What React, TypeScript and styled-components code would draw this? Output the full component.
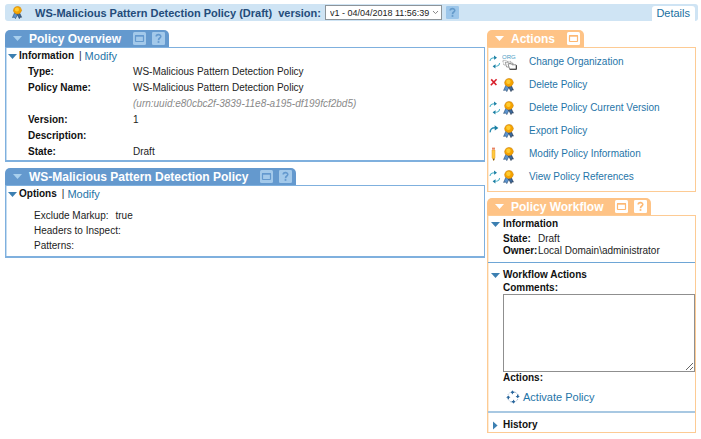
import React from "react";
import styled, { createGlobalStyle } from "styled-components";

const Global = createGlobalStyle`
  * { box-sizing: border-box; }
  body {
    margin: 0;
    background: #fff;
    color: #1c1c1c;
    font: 10px/16px "Liberation Sans", Arial, sans-serif;
  }
  h1, h2, h3, dl, dd, dt, ul, p { margin: 0; padding: 0; font-size: inherit; }
  button { border: 0; padding: 0; margin: 0; background: none; font: inherit; cursor: pointer; }
  svg { display: block; flex: none; }
`;

type Tone = "blue" | "orange";

const tones = {
  blue: { tab: "#6499ce", border: "#7fb0de", mark: "#a9d0ee", icon: "#a3c9ea", glyph: "#6499ce" },
  orange: { tab: "#fec386", border: "#fdcb94", mark: "#ffffff", icon: "#ffffff", glyph: "#fdb873" },
};

const Page = styled.div`
  padding: 4px 3px 5px 5px;
`;

const TopBar = styled.header`
  display: flex;
  align-items: center;
  height: 17px;
  padding: 0 3px 0 6px;
  border-radius: 3px;
  background: #cfe4f4;
  color: #244c7a;
  font-size: 11px;
`;

const PageTitle = styled.h1`
  margin-left: 11px;
  font-size: 11px;
  white-space: nowrap;
`;

const VersionLabel = styled.label`
  margin: 0 4px 0 6px;
  font-weight: bold;
`;

const SelectBox = styled.span`
  position: relative;
  display: block;
  margin-right: 4px;
  svg { position: absolute; right: 3px; top: 4px; pointer-events: none; }
`;

const VersionSelect = styled.select`
  display: block;
  appearance: none;
  width: 117px;
  height: 15px;
  padding: 0 0 0 4px;
  border: 1px solid #8d9499;
  border-radius: 0;
  background: #fff;
  color: #222;
  font: 9px/12px "Liberation Sans", Arial, sans-serif;
`;

const DetailsTab = styled.a`
  align-self: flex-end;
  margin-left: auto;
  padding: 0 5px 0 4px;
  border-radius: 3px 3px 0 0;
  background: #fff;
  color: #20709f;
  line-height: 15px;
  text-decoration: none;
`;

const Columns = styled.main`
  display: grid;
  grid-template-columns: minmax(0, 1fr) 209px;
  gap: 2px;
  align-items: start;
  padding: 9px 2px 0 0;
`;

const Column = styled.div`
  display: flex;
  flex-direction: column;
  gap: 6px;
`;

const PanelTab = styled.div<{ $tone: Tone }>`
  display: flex;
  align-items: center;
  width: fit-content;
  height: 17px;
  padding: 0 4px 0 8px;
  border-radius: 5px 5px 0 0;
  background: ${(p) => tones[p.$tone].tab};
  color: #fff;
`;

const PanelTitle = styled.h2`
  margin: 0 12px 0 7px;
  font-size: 12px;
  white-space: nowrap;
`;

const TabIcons = styled.div`
  display: flex;
  gap: 6px;
`;

const PanelBody = styled.div<{ $tone: Tone }>`
  border: 1px solid ${(p) => tones[p.$tone].border};
  border-bottom-width: ${(p) => (p.$tone === "blue" ? 2 : 1)}px;
  box-shadow: ${(p) => (p.$tone === "blue" ? "inset 1px 0 #c4dcf1" : "inset 1px 0 #feecd6")};
`;

const SectionHead = styled.div<{ $wide?: boolean }>`
  display: flex;
  align-items: center;
  gap: ${(p) => (p.$wide ? 3 : 2)}px;
  height: ${(p) => (p.$wide ? 14 : 16)}px;
  margin-top: ${(p) => (p.$wide ? 1 : 0)}px;
  padding-left: ${(p) => (p.$wide ? 3 : 2)}px;
  h3 { color: #111; }
`;

const Divider = styled.span`
  margin: 0 1px 0 3px;
`;

const Link = styled.a`
  color: #1f75a8;
  text-decoration: none;
`;

const BigLink = styled(Link)`
  font-size: 11px;
`;

const Fields = styled.dl`
  display: grid;
  grid-template-columns: 105px 1fr;
  padding: 0 0 0 22px;
  dt { color: #111; font-weight: bold; }
`;

const Uuid = styled.em`
  display: block;
  color: #8a8a8a;
`;

const Options = styled.dl`
  padding: 6px 0 3px 28px;
  line-height: 15px;
`;

const OptionRow = styled.div`
  display: flex;
  gap: 7px;
`;

const ActionList = styled.ul`
  list-style: none;
  padding: 2px 0 3px 1px;
`;

const ActionItem = styled.li`
  display: grid;
  grid-template-columns: 13px 27px 1fr;
  align-items: center;
  height: 23px;
`;

const Workflow = styled.dl`
  display: grid;
  grid-template-columns: 35px 1fr;
  padding: 2px 0 5px 15px;
  line-height: 12px;
  dt { color: #111; font-weight: bold; }
`;

const Rule = styled.hr<{ $heavy?: boolean }>`
  height: ${(p) => (p.$heavy ? 2 : 1)}px;
  margin: 0 0 5px;
  border: 0;
  background: ${(p) => (p.$heavy ? "#a8c8e2" : "#6ea6d6")};
`;

const WorkflowForm = styled.div`
  display: flex;
  flex-direction: column;
  padding: 0 0 2px 15px;
  line-height: 12px;
`;

const FieldTitle = styled.label`
  color: #111;
  font-weight: bold;
`;

const GroupTitle = styled.p`
  color: #111;
  font-weight: bold;
`;

const Comments = styled.textarea`
  display: block;
  width: 100%;
  height: 78px;
  border: 1px solid #8f8f8f;
  border-radius: 0;
  background: #fff;
  resize: vertical;
`;

const Activate = styled.div`
  display: flex;
  align-items: center;
  gap: 3px;
  padding-left: 3px;
  height: 25px;
`;

function Medal({ size = 14 }: { size?: number }) {
  return (
    <svg width={size} height={size} viewBox="0 0 14 14" aria-hidden="true">
      <path d="M4 7 L1.6 12.4 L3.6 12 L4.8 13.6 L7 9.2 Z" fill="#5b93cf" stroke="#294b70" strokeWidth=".6" />
      <path d="M9 7 L11.4 12.1 L9.8 12 L9 13.6 L6.6 9 Z" fill="#3c689a" stroke="#1c2f49" strokeWidth=".6" />
      <path d="M7 .4 L8.6 .8 L10 1.4 L10.8 2.9 L11.4 4.6 L10.8 6.2 L9.7 7.7 L8 8.6 L6 8.6 L4.3 7.8 L3 6.4 L2.6 4.6 L3.2 2.8 L4.2 1.4 L5.5 .8 Z" fill="#f5a300" stroke="#c57c10" strokeWidth=".5" />
      <circle cx="6.4" cy="3.8" r="2.2" fill="#ffcb31" />
    </svg>
  );
}

function Cycle() {
  return (
    <svg width="12" height="14" viewBox="0 0 12 14" aria-hidden="true">
      <path d="M1 6 C1.2 3.8 2.8 2.7 5.4 2.7" fill="none" stroke="#4fb2c8" strokeWidth="1.1" />
      <path d="M5 .6 L8 2.8 L5.2 4.8 Z" fill="#187da2" />
      <path d="M10.6 8 C10.4 10.2 9 11.3 6.4 11.3" fill="none" stroke="#4fb2c8" strokeWidth="1.1" />
      <path d="M6.6 9.2 L3.6 11.2 L6.4 13.4 Z" fill="#187da2" />
    </svg>
  );
}

function Arrow() {
  return (
    <svg width="12" height="14" viewBox="0 0 12 14" aria-hidden="true">
      <path d="M1.2 8.4 C1 5.5 2.8 3.8 6 3.8" fill="none" stroke="#2f8fb2" strokeWidth="1.4" />
      <path d="M5.6 1.2 L9.4 3.9 L5.8 6.5 Z" fill="#187da2" />
    </svg>
  );
}

function Cross() {
  return (
    <svg width="12" height="14" viewBox="0 0 12 14" aria-hidden="true">
      <path d="M2.2 1.4 L7.4 7 M7.6 1.2 L1.8 7.2" stroke="#d8202c" strokeWidth="1.6" />
    </svg>
  );
}

function Pencil() {
  return (
    <svg width="12" height="14" viewBox="0 0 12 14" aria-hidden="true">
      <path d="M3 3 H6 V10.4 L4.7 13.6 L3 10.4 Z" fill="#ffc93f" stroke="#e39b25" strokeWidth=".5" />
      <path d="M3 .6 H6 V2.6 H3 Z" fill="#e88363" />
      <path d="M4 11.8 H5.5 L4.8 13.7 Z" fill="#333" />
    </svg>
  );
}

function OrgFolders() {
  return (
    <svg width="16" height="16" viewBox="0 0 16 16" aria-hidden="true">
      <text x="0" y="5" fontSize="6" fill="#4a9cc4" fontFamily="Liberation Sans">ORG</text>
      <path d="M.8 6.4 H4 L5 7.4 H9 V11 H1.8 Z" fill="#fff" stroke="#888" strokeWidth=".7" strokeDasharray="1 .5" />
      <path d="M3.3 8.2 H6 L7 9.2 H11 V13 H4.6 Z" fill="#fff" stroke="#777" strokeWidth=".7" />
      <path d="M6 9.8 H9 L10 10.8 H14 V15 H7.6 Z" fill="#fff" stroke="#666" strokeWidth=".7" />
      <path d="M14.5 11.2 V15.4 H7.6" fill="none" stroke="#222" strokeWidth=".8" />
    </svg>
  );
}

function Spinner() {
  return (
    <svg width="14" height="14" viewBox="0 0 14 14" aria-hidden="true">
      <g fill="none" stroke="#8ba9c9" strokeWidth="1" strokeDasharray="1 1">
        <path d="M2 4.6 L4.8 1.8 M9 2 L12 4.4 M12 9 L9.4 12 M4.8 12 L2 9.4" />
      </g>
      <g fill="#29669c">
        <path d="M4.6 2.2 L7 .2 V1.5 H8.4 V3 H7 V4.4 Z" />
        <path d="M11.7 8.3 L9.6 6.1 H11 V4.6 H12.5 V6.1 H13.8 Z" />
        <path d="M9.4 11.8 L7 13.8 V12.5 H5.6 V11 H7 V9.6 Z" />
        <path d="M2.3 5.6 L4.4 7.8 H3 V9.3 H1.6 V7.8 H.2 Z" />
      </g>
    </svg>
  );
}

function Triangle({ color, side }: { color: string; side?: boolean }) {
  return (
    <svg width="9" height="9" viewBox="0 0 9 9" aria-hidden="true">
      <path d={side ? "M2 .5 L6.6 4.5 L2 8.5 Z" : "M0 2 H9 L4.5 7 Z"} fill={color} />
    </svg>
  );
}

function WindowIcon({ tone }: { tone: Tone }) {
  const t = tones[tone];
  return (
    <svg width="13" height="13" viewBox="0 0 13 13" aria-hidden="true">
      <rect width="13" height="13" rx="1.5" fill={t.icon} />
      <rect x="2.5" y="3.5" width="8" height="6" rx=".5" fill={t.icon} stroke={t.glyph} strokeWidth="1.2" />
      <path d="M2 4 H11" stroke={t.glyph} strokeWidth="1.4" />
    </svg>
  );
}

function HelpIcon({ bg, fg }: { bg: string; fg: string }) {
  return (
    <svg width="13" height="13" viewBox="0 0 12 12" aria-hidden="true">
      <rect width="12" height="12" rx="1.2" fill={bg} />
      <path d="M3.9 4.2 C3.9 1.8 8.1 1.8 8.1 4.1 C8.1 5.6 6 5.5 6 7.5" fill="none" stroke={fg} strokeWidth="1.5" />
      <rect x="5.2" y="8.4" width="1.6" height="1.6" fill={fg} />
    </svg>
  );
}

function Panel({ tone, title, help = true, children }: { tone: Tone; title: string; help?: boolean; children: React.ReactNode }) {
  const t = tones[tone];
  return (
    <section>
      <PanelTab $tone={tone}>
        <button aria-label={`Collapse ${title}`}><Triangle color={t.mark} /></button>
        <PanelTitle>{title}</PanelTitle>
        <TabIcons>
          <button aria-label="Open in window"><WindowIcon tone={tone} /></button>
          {help && <button aria-label="Help"><HelpIcon bg={t.icon} fg={t.glyph} /></button>}
        </TabIcons>
      </PanelTab>
      <PanelBody $tone={tone}>{children}</PanelBody>
    </section>
  );
}

function Section({ title, modify, wide, closed }: { title: string; modify?: boolean; wide?: boolean; closed?: boolean }) {
  return (
    <SectionHead $wide={wide}>
      <button aria-label={`Toggle ${title}`} aria-expanded={!closed}><Triangle color="#3c7fb1" side={closed} /></button>
      <h3>{title}</h3>
      {modify && <><Divider>|</Divider><BigLink href="#modify">Modify</BigLink></>}
    </SectionHead>
  );
}

const actions = [
  { label: "Change Organization", mark: <Cycle />, icon: <OrgFolders /> },
  { label: "Delete Policy", mark: <Cross />, icon: <Medal /> },
  { label: "Delete Policy Current Version", mark: <Cycle />, icon: <Medal /> },
  { label: "Export Policy", mark: <Arrow />, icon: <Medal /> },
  { label: "Modify Policy Information", mark: <Pencil />, icon: <Medal /> },
  { label: "View Policy References", mark: <Cycle />, icon: <Medal /> },
];

export default function App() {
  return (
    <Page>
      <Global />
      <TopBar>
        <Medal size={13} />
        <PageTitle>WS-Malicious Pattern Detection Policy (Draft)</PageTitle>
        <VersionLabel htmlFor="version">version:</VersionLabel>
        <SelectBox>
          <VersionSelect id="version">
            <option>v1 - 04/04/2018 11:56:39</option>
          </VersionSelect>
          <svg width="7" height="7" viewBox="0 0 7 7" aria-hidden="true">
            <path d="M1 2 L3.5 4.6 L6 2" fill="none" stroke="#888" />
          </svg>
        </SelectBox>
        <button aria-label="Help"><HelpIcon bg="#9cc6ea" fg="#659bcb" /></button>
        <DetailsTab href="#details">Details</DetailsTab>
      </TopBar>
      <Columns>
        <Column>
          <Panel tone="blue" title="Policy Overview">
            <Section title="Information" modify />
            <Fields>
              <dt>Type:</dt><dd>WS-Malicious Pattern Detection Policy</dd>
              <dt>Policy Name:</dt>
              <dd>WS-Malicious Pattern Detection Policy<Uuid>(urn:uuid:e80cbc2f-3839-11e8-a195-df199fcf2bd5)</Uuid></dd>
              <dt>Version:</dt><dd>1</dd>
              <dt>Description:</dt><dd />
              <dt>State:</dt><dd>Draft</dd>
            </Fields>
          </Panel>
          <Panel tone="blue" title="WS-Malicious Pattern Detection Policy">
            <Section title="Options" modify />
            <Options>
              <OptionRow><dt>Exclude Markup:</dt><dd>true</dd></OptionRow>
              <OptionRow><dt>Headers to Inspect:</dt><dd /></OptionRow>
              <OptionRow><dt>Patterns:</dt><dd /></OptionRow>
            </Options>
          </Panel>
        </Column>
        <Column>
          <Panel tone="orange" title="Actions" help={false}>
            <ActionList>
              {actions.map((a) => (
                <ActionItem key={a.label}>
                  {a.mark}{a.icon}<Link href="#action">{a.label}</Link>
                </ActionItem>
              ))}
            </ActionList>
          </Panel>
          <Panel tone="orange" title="Policy Workflow">
            <Section title="Information" wide />
            <Workflow>
              <dt>State:</dt><dd>Draft</dd>
              <dt>Owner:</dt><dd>Local Domain\administrator</dd>
            </Workflow>
            <Rule />
            <Section title="Workflow Actions" wide />
            <WorkflowForm>
              <FieldTitle htmlFor="comments">Comments:</FieldTitle>
              <Comments id="comments" />
              <GroupTitle>Actions:</GroupTitle>
              <Activate><Spinner /><BigLink href="#activate">Activate Policy</BigLink></Activate>
            </WorkflowForm>
            <Rule $heavy />
            <Section title="History" wide closed />
          </Panel>
        </Column>
      </Columns>
    </Page>
  );
}
